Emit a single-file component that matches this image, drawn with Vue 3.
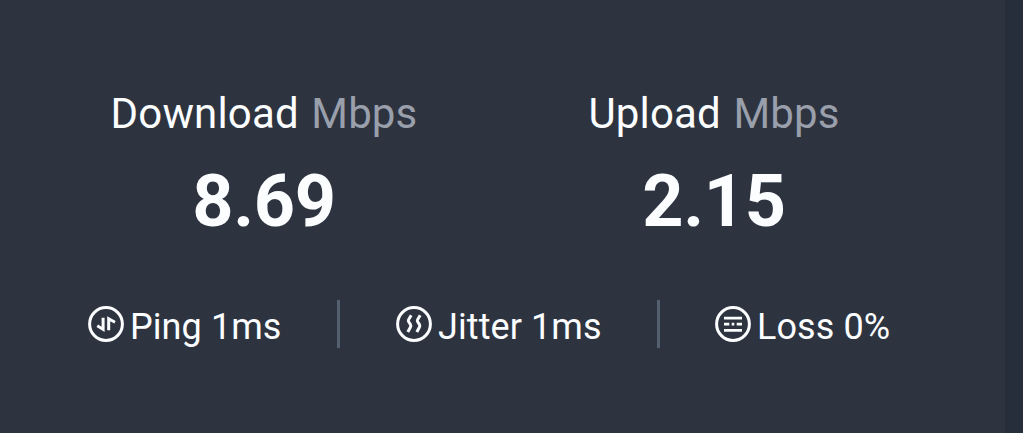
<script setup>
const speeds = [
  { label: 'Download', value: '8.69' },
  { label: 'Upload', value: '2.15' }
]

const stats = [
  { icon: 'ping', text: 'Ping 1ms' },
  { icon: 'jitter', text: 'Jitter 1ms' },
  { icon: 'loss', text: 'Loss 0%' }
]
</script>
<template>
  <div class="page">
    <div class="card">
      <div class="speeds">
        <div class="speed" v-for="speed in speeds" :key="speed.label">
          <div class="label">{{ speed.label }} <span class="unit">Mbps</span></div>
          <div class="value">{{ speed.value }}</div>
        </div>
      </div>
      <div class="stats">
        <div class="stat" :class="stat.icon" v-for="stat in stats" :key="stat.icon">
          <svg class="icon" viewBox="0 0 36 36">
            <circle cx="18" cy="18" r="16.4" />
            <path v-if="stat.icon === 'ping'" class="arrows" d="M15.1 11.8V23.4L9.3 19.8M20.7 24.2V12.8L27 16.2" />
            <path v-if="stat.icon === 'jitter'" d="M15.2 9.2L12.6 13.6Q12 14.8 12.8 16L14.4 18.4Q15.2 19.8 14.4 21.2L11.8 26M24.2 9.2L21.6 13.6Q21 14.8 21.8 16L23.4 18.4Q24.2 19.8 23.4 21.2L20.8 26" />
            <path v-if="stat.icon === 'loss'" class="lines" d="M9 12.2H27M9 18.2H14.3M16.7 18.2H19.3M21.7 18.2H27M9 24.4H27" />
          </svg>
          <span class="text">{{ stat.text }}</span>
        </div>
      </div>
    </div>
  </div>
</template>

<style>
body {
  background: #262d3b;
}
</style>
<style scoped>
.page {
  height: 433px;
  background: #262d3b;
  font-family: Roboto, "Liberation Sans", sans-serif;
  color: #fbfdff;
  overflow: hidden;
}
.card {
  box-sizing: border-box;
  width: 1005px;
  height: 433px;
  padding: 89px 0 0 20px;
  background: #2d3440;
}
.speeds {
  display: grid;
  grid-template-columns: 450px 450px;
  padding-left: 19px;
}
.speed {
  text-align: center;
  white-space: nowrap;
}
.label {
  font-size: 42px;
  line-height: 50px;
  letter-spacing: 0.15px;
}
.unit {
  margin-left: 2px;
  color: #999fab;
}
.value {
  margin-top: 21px;
  font-size: 72px;
  line-height: 84px;
  font-weight: 700;
  letter-spacing: -0.3px;
}
.stats {
  display: flex;
  margin-top: 56px;
  height: 48px;
}
.stat {
  box-sizing: border-box;
  display: flex;
  align-items: center;
  width: 320px;
  padding-left: 56px;
  border-right: 3px solid #53606f;
  white-space: nowrap;
}
.stat:first-child {
  padding-left: 68px;
}
.stat:last-child {
  padding-left: 55px;
  border-right: 0;
}
.icon {
  flex: none;
  width: 36px;
  height: 36px;
  fill: none;
  stroke: #fbfdff;
  stroke-width: 3;
}
.arrows {
  stroke-width: 3;
}
.lines {
  stroke-width: 2.8;
}
.text {
  margin-left: 6px;
  padding-top: 7px;
  font-size: 36px;
  line-height: 43px;
  letter-spacing: 0.08px;
}
</style>
